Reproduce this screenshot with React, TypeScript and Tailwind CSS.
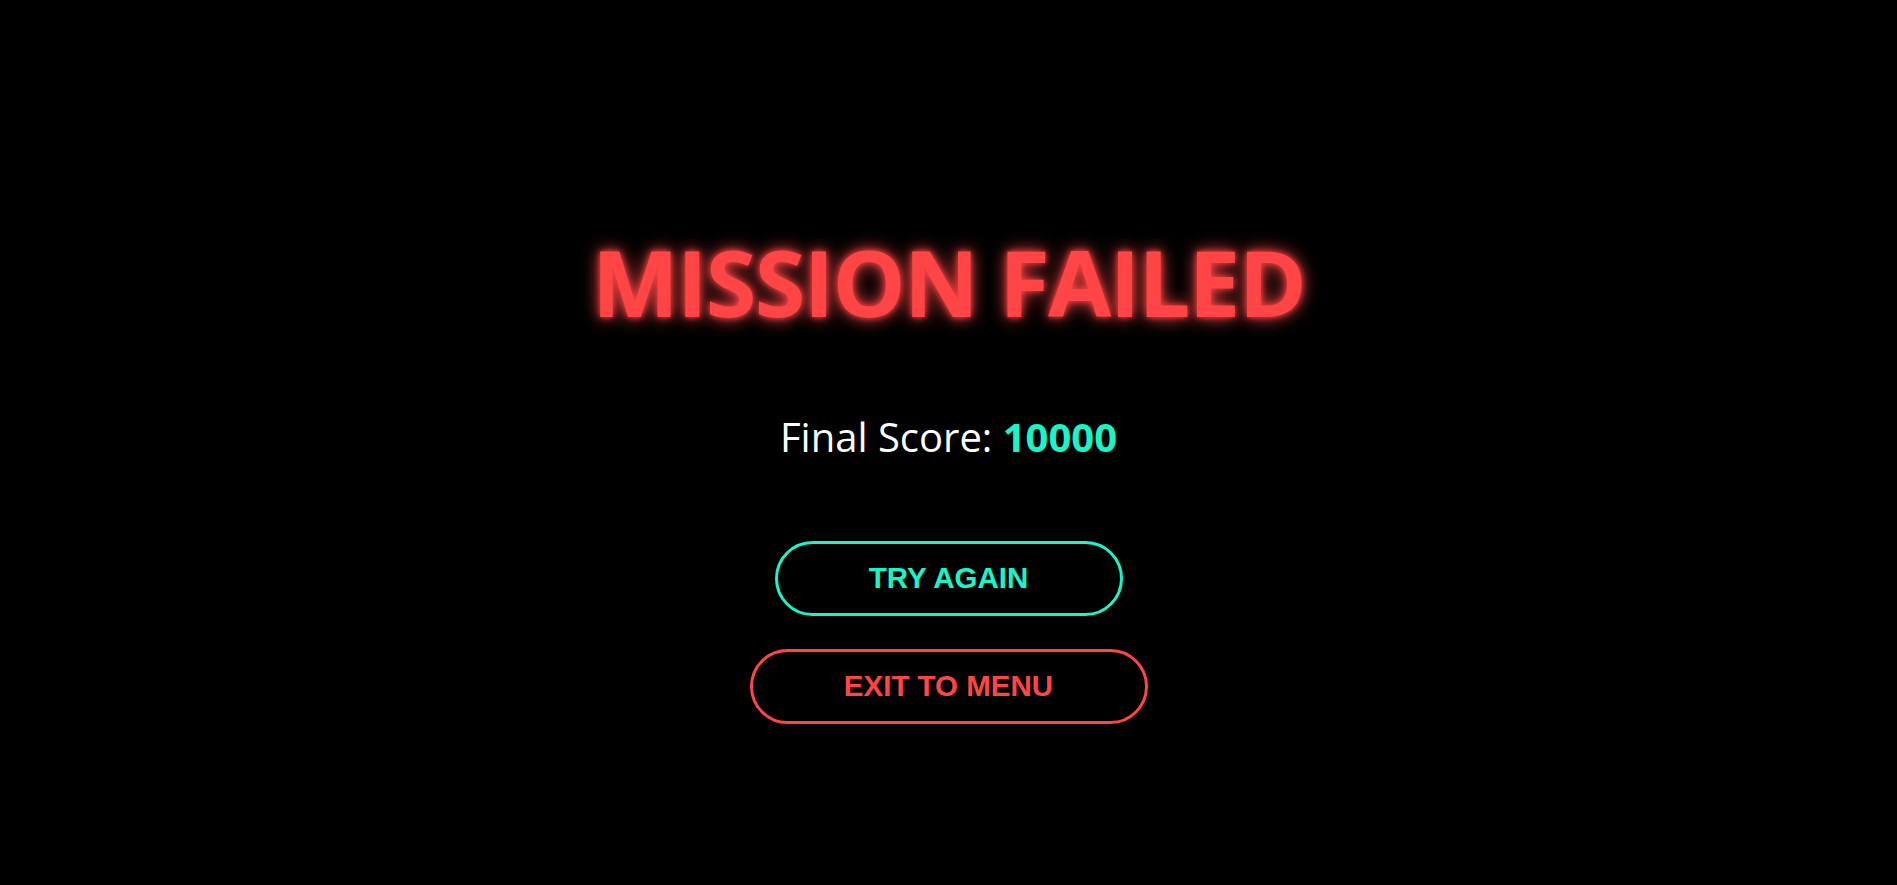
export default function App() {
  return (
    <div className="w-full h-[885px] bg-black flex flex-col items-center pt-[222px] font-['Open_Sans',sans-serif]">
      <h1 className="text-[92px] leading-none font-bold tracking-[-1.7px] text-[#ff4545] [text-shadow:0_0_18px_#ff4545,0_0_6px_#ff4545] h-[120px] flex items-center">
        MISSION FAILED
      </h1>
      <p className="mt-[75px] text-[40px] leading-none text-white">
        Final Score: <span className="font-bold text-[#19f5c8]">10000</span>
      </p>
      <div className="mt-[84px] flex flex-col items-center gap-[33px] font-['Liberation_Sans',Arial,sans-serif]">
        <button className="h-[75px] w-[348px] rounded-full border-[3px] border-[#19f5c8] text-[#19f5c8] text-[29.5px] font-bold">
          TRY AGAIN
        </button>
        <button className="h-[75px] w-[398px] rounded-full border-[3px] border-[#ff4545] text-[#ff4545] text-[29.5px] font-bold">
          EXIT TO MENU
        </button>
      </div>
    </div>
  );
}
